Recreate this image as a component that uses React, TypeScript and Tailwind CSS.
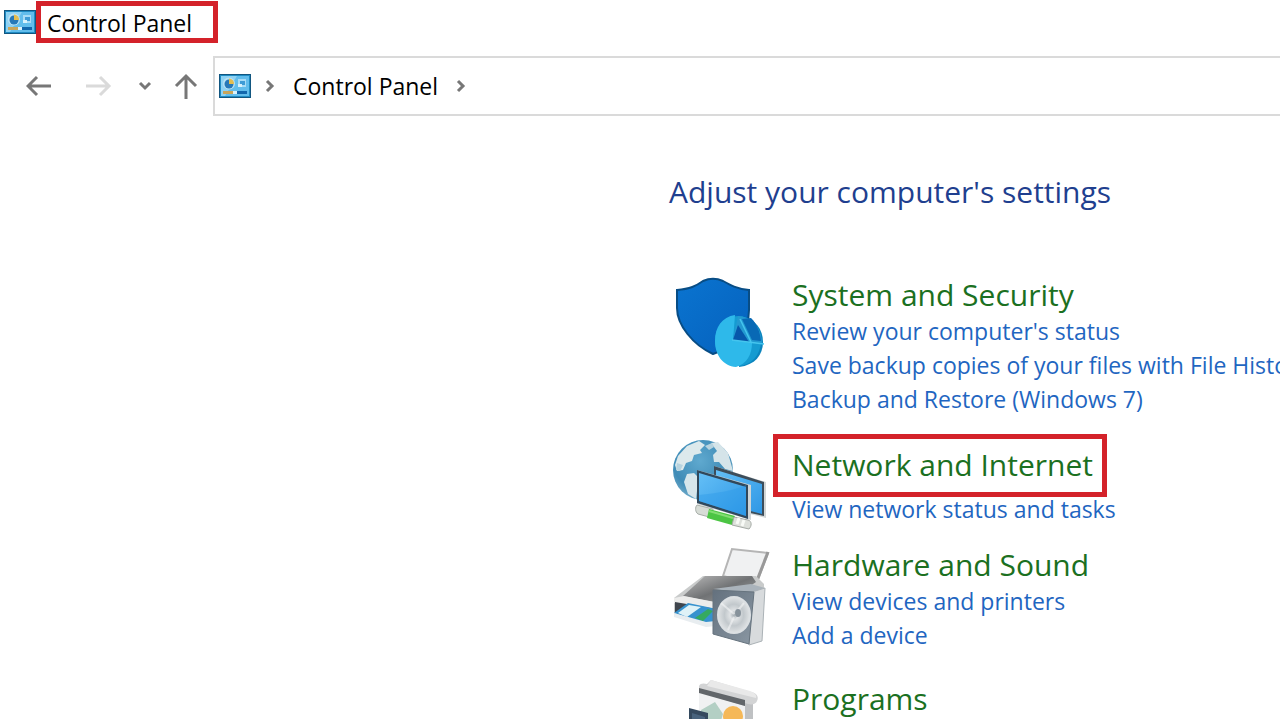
import React from 'react';

function ControlPanelIcon({ className }: { className?: string }) {
  return (
    <svg viewBox="0 0 32 24" className={className} aria-hidden="true">
      <rect width="32" height="24" fill="#125680" />
      <rect x="1" y="1" width="30" height="22" fill="#1f8cc4" />
      <rect x="2" y="2" width="28" height="20" fill="#62bdec" />
      <path d="M2 2h16L6 22H2z" fill="#8fd2f3" />
      <circle cx="10" cy="9.500" r="6" fill="#b9e2f5" />
      <circle cx="10" cy="10" r="4.500" fill="#2778b8" />
      <path d="M10 10V4.500A5 5 0 0 1 15 10z" fill="#e3bd50" />
      <path d="M19 5h8v8h-8z" fill="#a8dcf6" />
      <path d="M21 7h5v4h-5z" fill="#3e9bd6" />
      <path d="M19 10h4v3h-4z" fill="#d8f1fc" />
      <rect x="4" y="17" width="10" height="3" fill="#c9a55a" />
      <rect x="14" y="17" width="4" height="3" fill="#d9f1fc" />
      <rect x="18" y="17" width="10" height="3" fill="#1267ad" />
    </svg>
  );
}

function Crumb() {
  return (
    <svg viewBox="0 0 10 14" className="h-3.5 w-2.5" aria-hidden="true">
      <path d="M2 2l5 5-5 5" fill="none" stroke="#777" strokeWidth="3" />
    </svg>
  );
}

function ShieldIcon() {
  return (
    <svg viewBox="0 0 96 96" className="size-24" aria-hidden="true">
      <defs>
        <linearGradient id="shield" x1="0" y1="0" x2="1" y2="1">
          <stop offset="0" stopColor="#0a74d0" />
          <stop offset="1" stopColor="#0561bd" />
        </linearGradient>
      </defs>
      <g transform="translate(0 -1)">
        <path
          d="M4 15C17 14 23 11 30 6c7-3 13-3 20 0 7 4 14 8 26 9v20c0 25-17 38-36 44C20 70 4 50 4 33z"
          fill="url(#shield)"
          stroke="#084d85"
          strokeWidth="2"
        />
        <path d="M68 41c14 3 22 13 22 26 0 13-8 23-24 25z" fill="#0b84bd" />
        <ellipse cx="65" cy="66" rx="23" ry="25" fill="#159bd1" />
        <path d="M62 40c-13 2-20 12-20 26s8 25 21 26c11-3 16-13 16-24L60 65z" fill="#2eb9ea" />
        <path d="M65 41c13 1 23 10 24 27l-29-4z" fill="#2399d0" />
        <path d="M65 50l-5 15 16 2z" fill="#0757aa" />
        <path d="M69 44l9-1c6 6 9 14 10 23l-9-1z" fill="#0869b5" />
        <path d="M67 44l11 23M59 65l32 4" stroke="#45c5ee" strokeWidth="1.500" />
      </g>
    </svg>
  );
}

function NetworkIcon() {
  return (
    <svg viewBox="0 0 96 96" className="size-24 overflow-visible" aria-hidden="true">
      <defs>
        <radialGradient id="globe" cx=".45" cy=".35" r=".7">
          <stop offset="0" stopColor="#5fa9cf" />
          <stop offset=".65" stopColor="#408cb7" />
          <stop offset="1" stopColor="#7fb5cf" />
        </radialGradient>
        <linearGradient id="screen" x1="0" y1="0" x2="1" y2="1">
          <stop offset="0" stopColor="#64bff6" />
          <stop offset="1" stopColor="#2e97e5" />
        </linearGradient>
      </defs>
      <g transform="translate(0 3)">
        <circle cx="30" cy="31" r="30" fill="url(#globe)" />
        <path d="M5 17l9-10 12-5 6 4-5 5 2 3-8 2-2 6-6 2-3 7-6 1-2-6z" fill="#dce9ec" />
        <path d="M38 4l7-1 10 11 5 18-8-2-6-7-5 0-1-7 4-4z" fill="#d5e4e9" />
        <path d="M14 35l7-1 9 9-6 9-1 8-8-5-4-12z" fill="#d7e6eb" />
        <path d="M32 7l7-3 2 4-5 3zM4 24l6 2-3 6-4-1z" fill="#b7d3df" />
        <path d="M41 27l52 16v36L41 66z" fill="#d2d6d6" />
        <path d="M41 27l50 16v34L41 66z" fill="#3d4d5a" />
        <path d="M43 31l46 14v30L43 63z" fill="url(#screen)" />
        <path d="M24 31l54 15v35L24 65z" fill="#cfd5d7" />
        <path d="M24 31l51 15v34L24 64z" fill="#31485b" />
        <path d="M26 34l47 14v29L26 62z" fill="url(#screen)" />
        <path d="M26 56c18-2 34-4 47-10v31L26 62z" fill="#2b99e8" opacity=".4" />
        <path d="M24 66l16 4v9l-15-4c-3-2-3-7-1-9z" fill="#d7dcd6" stroke="#a8aea9" />
        <path d="M36 70l26 7-3 9-25-7z" fill="#4cc544" />
        <path d="M36 72l24 7" stroke="#83dd72" strokeWidth="2" />
        <path d="M61 78l14 3c4 1 4 6 1 9l-17-4z" fill="#dde0db" stroke="#a5aaa5" />
        <path d="M66 79l-2 6M71 81l-2 6" stroke="#f8faf6" strokeWidth="3" />
      </g>
    </svg>
  );
}

function HardwareIcon() {
  return (
    <svg viewBox="0 0 96 96" className="size-24 overflow-visible" aria-hidden="true">
      <defs>
        <linearGradient id="printer" x1="0" y1="0" x2="1" y2="1">
          <stop offset="0" stopColor="#bcbcbc" />
          <stop offset=".5" stopColor="#707274" />
          <stop offset="1" stopColor="#a5a8aa" />
        </linearGradient>
        <linearGradient id="speaker" x1="0" y1="0" x2="1" y2="1">
          <stop offset="0" stopColor="#64717e" />
          <stop offset="1" stopColor="#8a97a3" />
        </linearGradient>
        <radialGradient id="cone">
          <stop offset="0" stopColor="#a5adb3" />
          <stop offset=".25" stopColor="#e0e3e5" />
          <stop offset=".6" stopColor="#c2c8cc" />
          <stop offset="1" stopColor="#dfe2e4" />
        </radialGradient>
      </defs>
      <g transform="translate(0 2)">
        <path d="M50 28l9-27 36 4-12 32z" fill="#f0f1f2" stroke="#b5b5b5" strokeWidth="2" />
        <path d="M95 4l-12 31" stroke="#999" strokeWidth="3" />
        <path d="M1 50l29-22h53l8 8v16L48 77 1 66z" fill="#c9cbcb" />
        <path d="M10 48l22-20h47l4 6-32 22z" fill="url(#printer)" />
        <path d="M1 50l10-2 41 8v8L1 55z" fill="#ececeb" />
        <path d="M2 54l47 8v13L2 64z" fill="#3f454d" />
        <path d="M1 65l14-10 29 6 1 15-20-3z" fill="#3792ce" />
        <path d="M5 65l11-8 12 2-14 10z" fill="#dff2f7" />
        <path d="M22 70l13-9 5 2-10 10z" fill="#35aa5f" />
        <path d="M1 65l32 9 10-1v5l-10 1-32-10z" fill="#e8edf0" />
        <path d="M40 41l38-5 14 4-12 6z" fill="#aab3bb" />
        <path d="M79 44l13-4-3 53-13 4z" fill="#d8dbdd" stroke="#abb2b6" />
        <path d="M40 42l41 2-5 52-36-10z" fill="url(#speaker)" stroke="#66737e" />
        <ellipse cx="61" cy="67" rx="16" ry="18" fill="url(#cone)" stroke="#dce0e3" strokeWidth="2" />
        <path d="M61 66L48 55M62 66l9-11M61 69l-6 13" stroke="#f4f5f6" strokeWidth="2" opacity=".6" />
        <ellipse cx="65" cy="65" rx="3" ry="4" fill="#87929b" />
      </g>
    </svg>
  );
}

function ProgramsIcon() {
  return (
    <svg viewBox="0 0 96 96" className="size-24 overflow-visible" aria-hidden="true">
      <path d="M26 8l54 14v70H26z" fill="#bfc1c3" />
      <path d="M26 12l46 14v66H26z" fill="#f0f1f2" />
      <path d="M26 6c1-3 5-3 8-2L38 0l40 12c6 1 8 5 6 9-1 3-5 4-9 3L26 9z" fill="#d3d4d5" />
      <path d="M38 0l39 11c5 2 7 4 6 7L34 6z" fill="#e9e9e9" />
      <path d="M26 8l46 12v6L26 13z" fill="#62666a" />
      <path d="M28 30l14-8 8 12-3 10H28z" fill="#b3cfc4" />
      <circle cx="60" cy="36" r="10" fill="#f5b858" />
      <path d="M16 28l19 5v50H16z" fill="#34495e" />
      <path d="M19 33l13 4v12H19z" fill="#48637d" />
    </svg>
  );
}

const categories = [
  {
    title: 'System and Security',
    icon: <ShieldIcon />,
    links: [
      "Review your computer's status",
      'Save backup copies of your files with File History',
      'Backup and Restore (Windows 7)',
    ],
    spacing: 'mt-16',
  },
  {
    title: 'Network and Internet',
    icon: <NetworkIcon />,
    links: ['View network status and tasks'],
    spacing: 'mt-5',
    highlighted: true,
  },
  {
    title: 'Hardware and Sound',
    icon: <HardwareIcon />,
    links: ['View devices and printers', 'Add a device'],
    spacing: 'mt-3.5',
  },
  {
    title: 'Programs',
    icon: <ProgramsIcon />,
    links: [],
    spacing: 'mt-7',
  },
];

export default function App() {
  return (
    <div className="h-screen overflow-hidden bg-white font-['Open_Sans','Noto_Sans',sans-serif] text-black">
      {/* Title bar */}
      <header className="flex h-11 items-start pl-1 pt-px">
        <ControlPanelIcon className="mt-[9px] h-6 w-8" />
        <div className="h-[42px] w-[182px] border-5 border-[#d4222a] pl-1.5 text-[23px] leading-[34px]">
          Control Panel
        </div>
      </header>

      {/* Navigation bar */}
      <nav className="mt-3 flex h-[60px] items-center">
        <div className="flex w-[213px] shrink-0 items-center pl-[26px]">
          <button type="button" aria-label="Back">
            <svg viewBox="0 0 26 24" className="h-6 w-[26px]" fill="none" stroke="#777" strokeWidth="3">
              <path d="M25 12H2M11 3L2 12l9 9" />
            </svg>
          </button>
          <button type="button" aria-label="Forward" disabled className="ml-[34px]">
            <svg viewBox="0 0 26 24" className="h-6 w-[26px]" fill="none" stroke="#dadada" strokeWidth="3">
              <path d="M0 12h23M14 3l9 9-9 9" />
            </svg>
          </button>
          <button type="button" aria-label="Recent locations" className="ml-[26px]">
            <svg viewBox="0 0 14 10" className="h-2.5 w-3.5" fill="none" stroke="#777" strokeWidth="3">
              <path d="M2 2l5 5 5-5" />
            </svg>
          </button>
          <button type="button" aria-label="Up" className="ml-[21px]">
            <svg viewBox="0 0 26 26" className="size-[26px]" fill="none" stroke="#777" strokeWidth="3">
              <path d="M13 26V3M3 13L13 3l10 10" />
            </svg>
          </button>
        </div>
        <div className="flex h-[60px] flex-1 items-center border-2 border-r-0 border-[#dadada] pl-1">
          <ControlPanelIcon className="h-6 w-8 shrink-0" />
          <span className="ml-3.5">
            <Crumb />
          </span>
          <button type="button" className="ml-[18px] text-[23px] leading-9">
            Control Panel
          </button>
          <span className="ml-[18px]">
            <Crumb />
          </span>
        </div>
      </nav>

      <main className="grid grid-cols-2">
        <section className="col-start-2 pl-[29px] pt-14">
          <h1 className="whitespace-nowrap text-[30px] leading-10 text-[#1f3f8f]">
            Adjust your computer's settings
          </h1>
          {categories.map((category) => (
            <article key={category.title} className={`flex items-start gap-[23px] pl-1 ${category.spacing}`}>
              <div className="shrink-0">{category.icon}</div>
              <div className={category.highlighted ? 'pt-2.5' : ''}>
                <h2
                  className={`relative w-fit whitespace-nowrap text-[30px] leading-[38px] text-[#1b7021] ${
                    category.highlighted ? 'mb-2' : ''
                  }`}
                >
                  <a href="#">{category.title}</a>
                  {category.highlighted && (
                    <span className="pointer-events-none absolute -left-[19px] -right-3.5 -top-3 h-[63px] border-5 border-[#d4222a]" />
                  )}
                </h2>
                <ul>
                  {category.links.map((link) => (
                    <li key={link} className="whitespace-nowrap text-[23px] leading-[34px] text-[#1f66c1]">
                      <a href="#">{link}</a>
                    </li>
                  ))}
                </ul>
              </div>
            </article>
          ))}
        </section>
      </main>
    </div>
  );
}
